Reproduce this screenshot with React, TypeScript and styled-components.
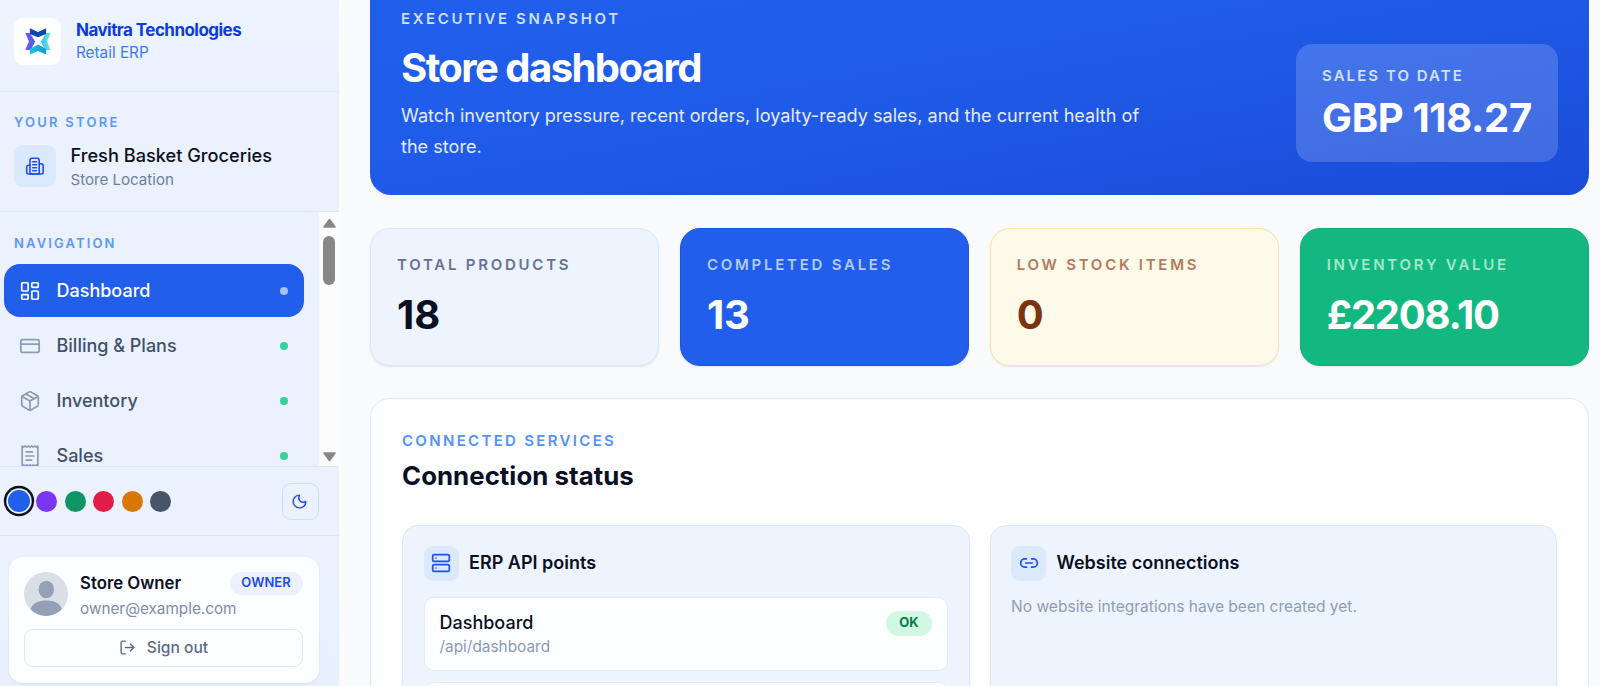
import React from "react";
import styled, { createGlobalStyle, css } from "styled-components";
import { CreditCard, LayoutDashboard, Link2, LogOut, Moon, Package, Server } from "lucide-react";

const Global = createGlobalStyle`
  * { box-sizing: border-box; }
  html, body { margin: 0; padding: 0; }
  body { font-family: Inter, sans-serif; background: #f8fafc; color: #0a0f24; overflow: hidden; }
  button { font-family: inherit; cursor: pointer; }
  h1, h2, h3, p { margin: 0; }
`;

const Shell = styled.div`
  display: grid;
  grid-template-columns: 339px 1fr;
  height: 686px;
  overflow: hidden;
`;

/* ---------- Sidebar ---------- */

const Sidebar = styled.aside`
  display: flex;
  flex-direction: column;
  height: 686px;
  background: linear-gradient(180deg, #eef4ff 0%, #ebf2fe 12%, #ebf2fe 80%, #e8f0fd 100%);
  box-shadow: 0 0 12px rgba(255, 255, 255, 0.8);
  overflow: hidden;
`;

const Brand = styled.div`
  display: flex;
  gap: 15px;
  height: 92px;
  padding: 18px 14px 0;
  border-bottom: 1px solid #dbe8fc;
  flex: none;
`;

const LogoTile = styled.div`
  display: grid;
  place-items: center;
  width: 47px;
  height: 47px;
  border-radius: 9px;
  background: #fff;
`;

const BrandName = styled.div`
  font-size: 17px;
  line-height: 22px;
  font-weight: 700;
  letter-spacing: -0.54px;
  color: #0b3be0;
  margin-top: 1px;
`;

const BrandSub = styled.div`
  font-size: 15.3px;
  line-height: 23px;
  color: #3d7bf5;
`;

const SideLabel = styled.div`
  font-size: 13px;
  line-height: 16px;
  font-weight: 600;
  letter-spacing: 2.25px;
  color: #5c97f8;
`;

const StoreBlock = styled.section`
  height: 120px;
  padding: 22px 14px 0;
  border-bottom: 1px solid #dbe8fc;
  flex: none;
`;

const StoreRow = styled.div`
  display: flex;
  gap: 15px;
  margin-top: 15px;
`;

const IconTile = styled.div<{ $size: number }>`
  display: grid;
  place-items: center;
  flex: none;
  width: ${(p) => p.$size}px;
  height: ${(p) => p.$size}px;
  border-radius: 9px;
  background: #dbe9fd;
  color: #1d4ff0;
`;

const StoreName = styled.div`
  font-size: 18.2px;
  line-height: 20px;
  font-weight: 500;
  margin-left: -0.5px;
`;

const StoreSub = styled.div`
  font-size: 15.1px;
  line-height: 22px;
  margin: 4px 0 0 -0.5px;
  color: #6e7f9c;
`;

const NavRegion = styled.div`
  display: flex;
  height: 254px;
  flex: none;
  overflow: hidden;
`;

const NavList = styled.nav`
  flex: 1;
  padding: 22px 15px 0 3.5px;
  ${SideLabel} { margin: 0.5px 0 13.5px 10.5px; letter-spacing: 2.15px; }
`;

const NavItem = styled.a<{ $active?: boolean }>`
  display: flex;
  align-items: center;
  height: 53px;
  margin-bottom: 2.1px;
  padding: 0 16px 0 15.5px;
  border-radius: 16px;
  font-size: 18px;
  font-weight: 500;
  line-height: 22px;
  color: #42506a;
  svg { color: #8c9bb8; margin-right: 15.5px; }
  ${(p) =>
    p.$active &&
    css`
      background: #205eeb;
      color: #fff;
      svg { color: #fff; }
    `}
`;

const Dot = styled.span<{ $active?: boolean }>`
  width: 8px;
  height: 8px;
  margin-left: auto;
  border-radius: 50%;
  background: ${(p) => (p.$active ? "#a6c2f9" : "#34d399")};
`;

const Scrollbar = styled.div`
  display: flex;
  flex-direction: column;
  align-items: center;
  width: 20px;
  padding: 6px 0 4px;
  background: #fcfcfc;
`;

const Thumb = styled.div`
  width: 12px;
  height: 49px;
  margin: 8px 0 auto;
  border-radius: 6px;
  background: #878787;
`;

const ThemeBar = styled.div`
  display: flex;
  align-items: center;
  justify-content: space-between;
  height: 70px;
  padding: 0 20.5px 0 3.5px;
  border-top: 1px solid #dbe8fc;
  border-bottom: 1px solid #dbe8fc;
  flex: none;
`;

const Swatches = styled.div`
  display: flex;
  align-items: center;
  gap: 7.5px;
`;

const Swatch = styled.span<{ $color: string; $selected?: boolean }>`
  width: 21px;
  height: 21px;
  border-radius: 50%;
  background: ${(p) => p.$color};
  ${(p) =>
    p.$selected &&
    css`
      width: 22px;
      height: 22px;
      margin: 0 -0.8px 0 4px;
      box-shadow: 0 0 0 1.7px #eef4ff, 0 0 0 4.2px #0a0f24;
    `}
`;

const ModeButton = styled.button`
  display: grid;
  place-items: center;
  width: 37px;
  height: 37px;
  padding: 0 1px 0 0;
  border: 1px solid #c9defb;
  border-radius: 9px;
  background: transparent;
  color: #1d4ff0;
`;

const UserCard = styled.section`
  width: 310px;
  height: 126.5px;
  margin: 20.5px 0 0 8.5px;
  padding: 15px 15.5px;
  border-radius: 14px;
  background: #fdfeff;
  box-shadow: 0 1px 2px rgba(90, 130, 200, 0.18);
  flex: none;
`;

const UserRow = styled.div`
  display: flex;
  height: 57px;
`;

const UserText = styled.div`
  margin-left: 12px;
  width: 150px;
  white-space: nowrap;
`;

const UserName = styled.div`
  font-size: 16.8px;
  line-height: 23px;
  font-weight: 600;
`;

const UserMail = styled.div`
  font-size: 15.3px;
  line-height: 27px;
  color: #7f8dab;
`;

const RoleBadge = styled.span`
  flex: none;
  width: 73px;
  height: 23px;
  margin-left: auto;
  padding-right: 1px;
  border-radius: 12px;
  background: #ebf2fe;
  color: #1d4ae0;
  font-size: 13px;
  line-height: 21.5px;
  text-align: center;
  font-weight: 600;
`;

const SignOut = styled.button`
  display: flex;
  align-items: center;
  justify-content: center;
  gap: 11px;
  width: 100%;
  height: 38.5px;
  padding: 0;
  border: 1px solid #e0e8f5;
  border-radius: 9px;
  background: #fdfeff;
  color: #5d6b86;
  font-size: 15.6px;
  font-weight: 500;
`;

/* ---------- Main ---------- */

const Main = styled.main`
  display: flex;
  flex-direction: column;
  padding: 0 11px 0 31px;
  height: 686px;
  overflow: hidden;
`;

const Eyebrow = styled.div<{ $color: string; $track?: number }>`
  font-size: 15px;
  line-height: 20px;
  font-weight: 600;
  letter-spacing: ${(p) => p.$track ?? 2.75}px;
  color: ${(p) => p.$color};
  white-space: nowrap;
`;

const Hero = styled.section`
  display: flex;
  justify-content: space-between;
  height: 195px;
  flex: none;
  padding: 9px 31px 0;
  border-radius: 0 0 21px 21px;
  background: linear-gradient(170deg, #205fec 0%, #1f5be8 45%, #1a4bd8 100%);
`;

const HeroTitle = styled.h1`
  font-size: 40px;
  line-height: 48px;
  font-weight: 700;
  letter-spacing: -1.55px;
  color: #fff;
  margin-top: 15px;
`;

const HeroText = styled.p`
  width: 760px;
  margin-top: 8px;
  font-size: 18.1px;
  line-height: 31px;
  color: #e3ecfe;
`;

const BigValue = styled.div<{ $color?: string; $track?: number }>`
  font-size: 40px;
  line-height: 48px;
  font-weight: 700;
  letter-spacing: ${(p) => p.$track ?? 0}px;
  white-space: nowrap;
  color: ${(p) => p.$color ?? "#fff"};
`;

const SalesBox = styled.div`
  width: 262px;
  height: 118px;
  margin-top: 35px;
  padding: 22px 26px;
  border-radius: 16px;
  background: rgba(255, 255, 255, 0.17);
  ${BigValue} { margin-top: 8px; }
`;

const Stats = styled.section`
  display: grid;
  grid-template-columns: repeat(4, 1fr);
  gap: 20.5px;
  margin-top: 33px;
  flex: none;
`;

const StatCard = styled.article<{ $bg: string; $border: string }>`
  height: 138px;
  padding: 26px 26px;
  border: 1px solid ${(p) => p.$border};
  border-radius: 20px;
  background: ${(p) => p.$bg};
  box-shadow: 0 1px 2px rgba(30, 60, 120, 0.1);
  ${BigValue} { margin-top: 16px; }
`;

const Panel = styled.section`
  flex: none;
  height: 340px;
  margin-top: 31.5px;
  padding: 32px 31px 0;
  border: 1px solid #dfe9fa;
  border-radius: 20px;
  background: #fefeff;
`;

const PanelTitle = styled.h2`
  font-size: 25.8px;
  line-height: 34px;
  font-weight: 700;
  letter-spacing: 0.05px;
  margin-top: 8px;
`;

const ServiceGrid = styled.div`
  display: grid;
  grid-template-columns: 1fr 1fr;
  gap: 20px;
  margin-top: 32px;
`;

const ServiceCard = styled.article`
  height: 240px;
  padding: 20px 20.5px;
  border: 1px solid #dbe8fc;
  border-radius: 16px;
  background: #edf4fe;
`;

const ServiceHead = styled.div`
  display: flex;
  align-items: center;
  gap: 10.5px;
`;

const ServiceTitle = styled.h3`
  font-size: 18px;
  line-height: 24px;
  font-weight: 600;
`;

const Endpoint = styled.div`
  display: flex;
  align-items: flex-start;
  justify-content: space-between;
  height: 74.5px;
  margin-top: 16px;
  padding: 13px 15px;
  border: 1px solid #dfeafc;
  border-radius: 10px;
  background: #fdfeff;
  & + & { margin-top: 11px; }
`;

const EndpointName = styled.div`
  font-size: 18px;
  line-height: 24px;
  font-weight: 500;
`;

const EndpointPath = styled.div`
  font-size: 15.4px;
  line-height: 23px;
  color: #8c99b3;
`;

const OkBadge = styled.span`
  width: 46px;
  height: 25px;
  border-radius: 13px;
  background: #d0f8e2;
  color: #087a4c;
  font-size: 13px;
  line-height: 23px;
  text-align: center;
  font-weight: 700;
`;

const EmptyNote = styled.p`
  margin-top: 14px;
  font-size: 15.55px;
  line-height: 24px;
  color: #8f9db8;
`;

/* ---------- Drawings ---------- */

const Logo = () => (
  <svg width="26" height="27" viewBox="0 0 25 26">
    <defs>
      <linearGradient id="lgL" x1="0" x2="1"><stop offset="0" stopColor="#7b5cf5" /><stop offset="1" stopColor="#4a5be8" /></linearGradient>
      <linearGradient id="lgR" x1="0" x2="1"><stop offset="0" stopColor="#2bc8e0" /><stop offset="1" stopColor="#6ee8e6" /></linearGradient>
      <linearGradient id="lgB" x1="0" x2="1"><stop offset="0" stopColor="#12c3ea" /><stop offset="1" stopColor="#1597d8" /></linearGradient>
    </defs>
    <path d="M0.200 4.700H4.700L9.700 13L5.700 21.200H0.200L3.800 13Z" fill="url(#lgL)" />
    <path d="M24.800 4.700H20.300L15.300 13L19.300 21.200H24.800L21.200 13Z" fill="url(#lgR)" />
    <path d="M4.700 0.300L12.500 3.800L20.300 0.300V5.700L12.500 9L4.700 5.700Z" fill="#0f48ac" />
    <path d="M4.700 25.600L12.500 22.200L20.300 25.600V20.200L12.500 16L4.700 20.200Z" fill="url(#lgB)" />
  </svg>
);

const StoreIcon = () => (
  <svg width="20" height="20" viewBox="0 0 20 20" fill="none" stroke="currentColor" strokeWidth="1.600" strokeLinecap="round" strokeLinejoin="round">
    <path d="M5 18V4.300Q5 2.200 7 2.200H12.200Q14.200 2.200 14.200 4.300V18Z" />
    <path d="M5 9.200H3.800Q1.700 9.200 1.700 11.200V16Q1.700 18 3.700 18H16.200Q18.200 18 18.200 16V10Q18.200 7.700 16 7.700H14.200" />
    <path d="M7.700 5.700H11.500M7.700 8.700H11.500M7.700 11.700H11.500M7.700 14.700H11.500" />
  </svg>
);

const SalesIcon = ({ size = 21 }: { size?: number; strokeWidth?: number }) => (
  <svg width={size} height={size} viewBox="0 0 21 21" fill="none" stroke="currentColor" strokeWidth="1.600" strokeLinecap="round" strokeLinejoin="round">
    <path d="M3 1L4.500 2L6 1L7.500 2L9 1L10.500 2L12 1L13.500 2L15 1L16.500 2L18 1V20L16.500 19L15 20L13.500 19L12 20L10.500 19L9 20L7.500 19L6 20L4.500 19L3 20Z" />
    <path d="M6.800 6.500H12.800M6.800 10.500H14.200M6.800 14.500H12" />
  </svg>
);

const Avatar = () => (
  <svg width="44" height="44" viewBox="0 0 44 44">
    <defs><clipPath id="av"><circle cx="22" cy="22" r="22" /></clipPath></defs>
    <circle cx="22" cy="22" r="22" fill="#d9dee7" />
    <g clipPath="url(#av)" fill="#94a0b5">
      <ellipse cx="22.300" cy="17.500" rx="7.700" ry="8.700" />
      <path d="M6.500 37C9 30.500 15 28.500 22.300 28.500S35.500 30.500 38 37C34 43 28 44 22 44S10 43 6.500 37Z" />
    </g>
  </svg>
);

const Arrow = ({ down }: { down?: boolean }) => (
  <svg width="13" height="10" viewBox="0 0 13 10">
    <path d={down ? "M1 1H12L6.500 8.500Z" : "M1 9H12L6.500 1.500Z"} fill="#878787" stroke="#878787" strokeWidth="1.500" strokeLinejoin="round" />
  </svg>
);

const navItems = [
  { label: "Dashboard", Icon: LayoutDashboard, active: true },
  { label: "Billing & Plans", Icon: CreditCard },
  { label: "Inventory", Icon: Package },
  { label: "Sales", Icon: SalesIcon },
];

const swatches = ["#2060ec", "#7b35f0", "#0f9565", "#e11d48", "#d97706", "#475569"];

const stats = [
  { label: "TOTAL PRODUCTS", value: "18", bg: "#edf4fe", border: "#dbe8fc", ink: "#667390", num: "#0a0f24" },
  { label: "COMPLETED SALES", value: "13", bg: "#205eeb", border: "#1d55e4", ink: "#b4cbfb", num: "#fff" },
  { label: "LOW STOCK ITEMS", value: "0", bg: "#fefae9", border: "#fbe5a2", ink: "#b27a5c", num: "#7c3310" },
  { label: "INVENTORY VALUE", value: "£2208.10", bg: "#12b880", border: "#10b07a", ink: "#a5e6cd", num: "#fff", track: -1.25 },
];

export default function App() {
  return (
    <>
      <Global />
      <Shell>
        <Sidebar>
          <Brand>
            <LogoTile><Logo /></LogoTile>
            <div>
              <BrandName>Navitra Technologies</BrandName>
              <BrandSub>Retail ERP</BrandSub>
            </div>
          </Brand>
          <StoreBlock>
            <SideLabel>YOUR STORE</SideLabel>
            <StoreRow>
              <IconTile $size={42}><StoreIcon /></IconTile>
              <div>
                <StoreName>Fresh Basket Groceries</StoreName>
                <StoreSub>Store Location</StoreSub>
              </div>
            </StoreRow>
          </StoreBlock>
          <NavRegion>
            <NavList>
              <SideLabel>NAVIGATION</SideLabel>
              {navItems.map(({ label, Icon, active }) => (
                <NavItem key={label} $active={active}>
                  <Icon size={22} strokeWidth={1.9} />
                  {label}
                  <Dot $active={active} />
                </NavItem>
              ))}
            </NavList>
            <Scrollbar>
              <Arrow />
              <Thumb />
              <Arrow down />
            </Scrollbar>
          </NavRegion>
          <ThemeBar>
            <Swatches>
              {swatches.map((c, i) => <Swatch key={c} $color={c} $selected={i === 0} />)}
            </Swatches>
            <ModeButton><Moon size={17} strokeWidth={2} /></ModeButton>
          </ThemeBar>
          <UserCard>
            <UserRow>
              <Avatar />
              <UserText>
                <UserName>Store Owner</UserName>
                <UserMail>owner@example.com</UserMail>
              </UserText>
              <RoleBadge>OWNER</RoleBadge>
            </UserRow>
            <SignOut><LogOut size={17} strokeWidth={2} />Sign out</SignOut>
          </UserCard>
        </Sidebar>
        <Main>
          <Hero>
            <div>
              <Eyebrow $color="#cfdffd" $track={2.62}>EXECUTIVE SNAPSHOT</Eyebrow>
              <HeroTitle>Store dashboard</HeroTitle>
              <HeroText>
                Watch inventory pressure, recent orders, loyalty-ready sales, and the current health of the store.
              </HeroText>
            </div>
            <SalesBox>
              <Eyebrow $color="#d3e0fc" $track={2.05}>SALES TO DATE</Eyebrow>
              <BigValue $track={-0.35}>GBP 118.27</BigValue>
            </SalesBox>
          </Hero>
          <Stats>
            {stats.map((s) => (
              <StatCard key={s.label} $bg={s.bg} $border={s.border}>
                <Eyebrow $color={s.ink}>{s.label}</Eyebrow>
                <BigValue $color={s.num} $track={s.track}>{s.value}</BigValue>
              </StatCard>
            ))}
          </Stats>
          <Panel>
            <Eyebrow $color="#5592f8" $track={2.32}>CONNECTED SERVICES</Eyebrow>
            <PanelTitle>Connection status</PanelTitle>
            <ServiceGrid>
              <ServiceCard>
                <ServiceHead>
                  <IconTile $size={35}><Server size={20} strokeWidth={2} /></IconTile>
                  <ServiceTitle>ERP API points</ServiceTitle>
                </ServiceHead>
                <Endpoint>
                  <div>
                    <EndpointName>Dashboard</EndpointName>
                    <EndpointPath>/api/dashboard</EndpointPath>
                  </div>
                  <OkBadge>OK</OkBadge>
                </Endpoint>
                <Endpoint />
              </ServiceCard>
              <ServiceCard>
                <ServiceHead>
                  <IconTile $size={35}><Link2 size={20} strokeWidth={2} /></IconTile>
                  <ServiceTitle>Website connections</ServiceTitle>
                </ServiceHead>
                <EmptyNote>No website integrations have been created yet.</EmptyNote>
              </ServiceCard>
            </ServiceGrid>
          </Panel>
        </Main>
      </Shell>
    </>
  );
}
